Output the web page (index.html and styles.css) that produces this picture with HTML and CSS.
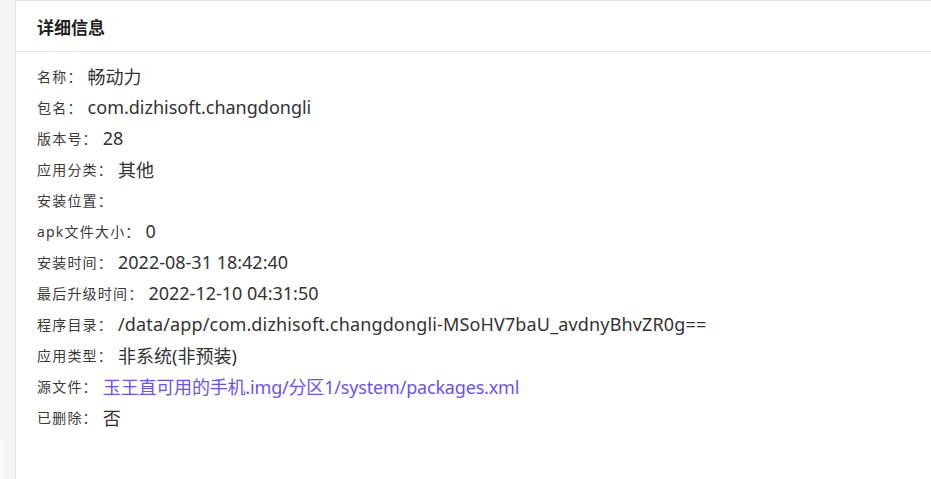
FILE: index.html
```html
<!DOCTYPE html>
<html lang="zh-CN">
<head>
<meta charset="utf-8">
<title>详细信息</title>
<link rel="stylesheet" href="styles.css">
</head>
<body>
<div class="layout">
  <aside class="side"><div class="side-notch"></div></aside>
  <section class="panel">
    <header class="panel-head">详细信息</header>
    <div class="panel-body">
      <div class="row"><span class="label">名称：</span><span class="value">畅动力</span></div>
      <div class="row"><span class="label">包名：</span><span class="value">com.dizhisoft.changdongli</span></div>
      <div class="row"><span class="label">版本号：</span><span class="value">28</span></div>
      <div class="row"><span class="label">应用分类：</span><span class="value">其他</span></div>
      <div class="row"><span class="label">安装位置：</span><span class="value"></span></div>
      <div class="row"><span class="label">apk文件大小：</span><span class="value">0</span></div>
      <div class="row"><span class="label">安装时间：</span><span class="value">2022-08-31 18:42:40</span></div>
      <div class="row"><span class="label">最后升级时间：</span><span class="value">2022-12-10 04:31:50</span></div>
      <div class="row"><span class="label">程序目录：</span><span class="value path">/data/app/com.dizhisoft.changdongli-MSoHV7baU_avdnyBhvZR0g==</span></div>
      <div class="row"><span class="label">应用类型：</span><span class="value">非系统(非预装)</span></div>
      <div class="row"><span class="label">源文件：</span><a class="value link" href="#">玉王直可用的手机.img/分区1/system/packages.xml</a></div>
      <div class="row"><span class="label">已删除：</span><span class="value">否</span></div>
    </div>
  </section>
</div>
</body>
</html>
```

FILE: styles.css
```css
* { box-sizing: border-box; }
html, body { margin: 0; padding: 0; height: 100%; }
body {
  font-family: "Noto Sans", "Noto Sans CJK SC", sans-serif;
  color: #333;
  background: #fff;
}
.layout {
  display: flex;
  height: 479px;
}
.side {
  width: 15px;
  flex: none;
  background: #f5f5f5;
  display: flex;
  flex-direction: column;
  justify-content: flex-end;
}
.side-notch {
  width: 3px;
  height: 39px;
  background: #fafafa;
}
.panel {
  flex: 1;
  border-left: 1px solid #e2e2e2;
  border-top: 1px solid #e2e2e2;
  background: #fff;
}
.panel-head {
  height: 51px;
  padding-left: 21px;
  display: flex;
  align-items: center;
  font-size: 17px;
  font-weight: 700;
  color: #222;
  border-bottom: 1px solid #e2e2e2;
}
.panel-body {
  padding: 8px 0 0 21px;
}
.row {
  height: 31px;
  display: flex;
  align-items: center;
  white-space: nowrap;
}
.label {
  font-size: 14px;
  letter-spacing: 1.2px;
  color: #3a3a3a;
}
.value {
  font-size: 18px;
  color: #333;
  margin-left: 5px;
}
.path {
  letter-spacing: 0.15px;
}
.link {
  color: #6c52f2;
  text-decoration: none;
  letter-spacing: -0.18px;
}
```
